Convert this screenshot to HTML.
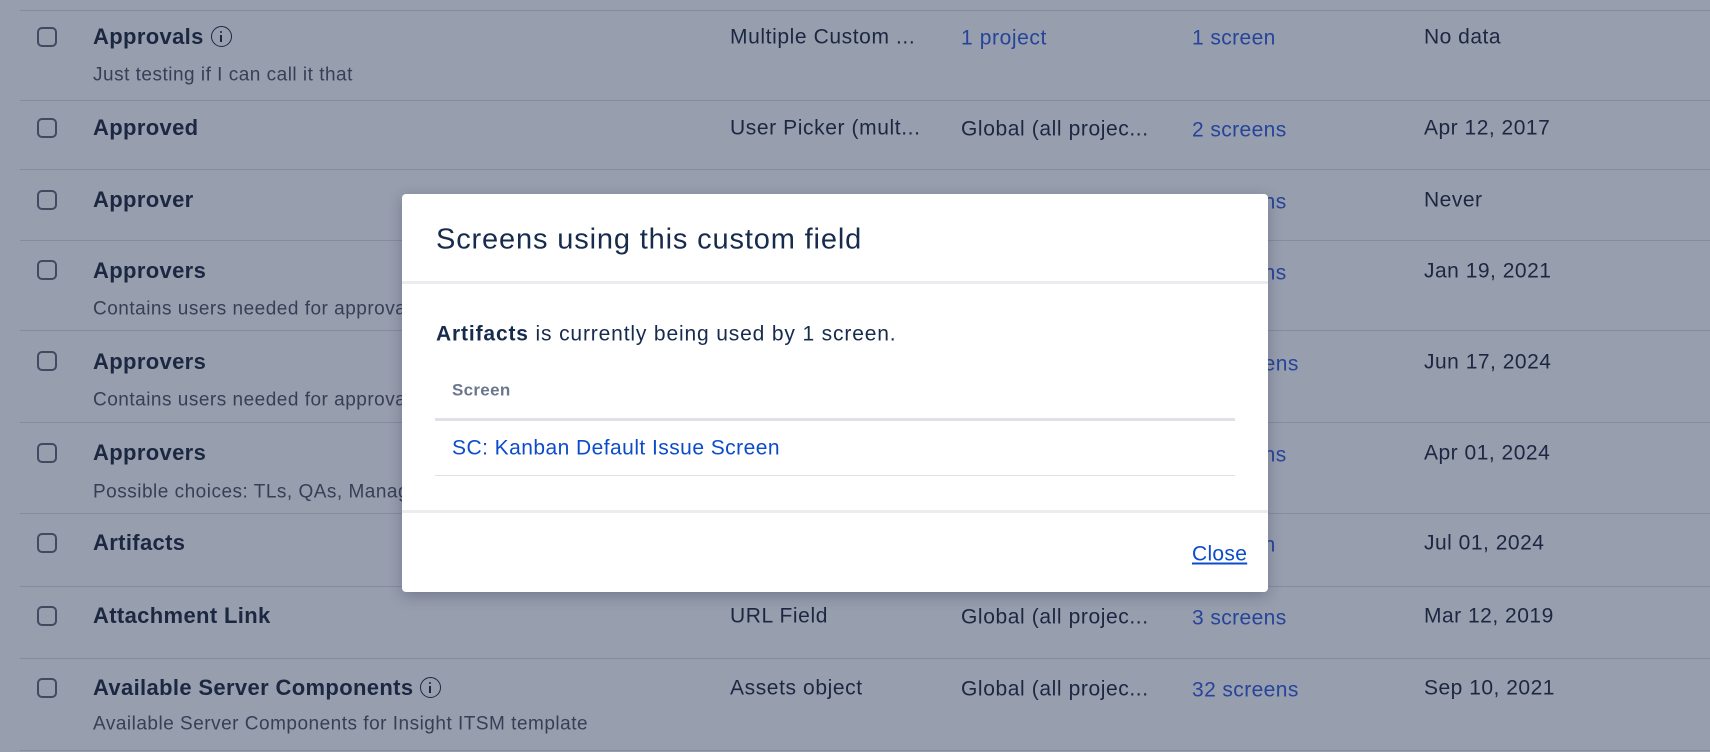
<!DOCTYPE html>
<html><head><meta charset="utf-8"><style>
*{margin:0;padding:0;box-sizing:border-box}
body{width:1710px;height:752px;overflow:hidden;background:#979eae;font-family:"Liberation Sans",Arial,sans-serif;position:relative;color:#1c2742}
.ln{position:absolute;left:20px;right:0;height:1px;background:#858c9e}
.cb{position:absolute;left:37px;width:20px;height:20px;border:2.5px solid #414a63;border-radius:5px}
.t{position:absolute;white-space:nowrap;line-height:1;transform:translateY(-50%)}
.b{font-weight:bold;font-size:22px;left:93px;letter-spacing:.35px}
.s{font-size:19px;left:93px;color:#363f56;letter-spacing:.5px}
.c1{left:730px;font-size:21px;letter-spacing:.6px}
.c2{left:961px;font-size:21px;letter-spacing:.6px}
.c3{left:1192px;font-size:21px;color:#26449a;letter-spacing:.4px}
.c4{left:1424px;font-size:21px;letter-spacing:.5px}
.i{display:inline-block;width:21px;height:21px;border:1.8px solid #1c2742;border-radius:50%;vertical-align:-3px;margin-left:7px;position:relative}
.i:before{content:"";position:absolute;left:7.8px;top:3.5px;width:2px;height:2px;background:#1c2742;border-radius:50%}
.i:after{content:"";position:absolute;left:7.8px;top:7.5px;width:2px;height:7px;background:#1c2742}
.modal{position:absolute;left:402px;top:194px;width:866px;height:398px;background:#fff;border-radius:4px;box-shadow:0 4px 14px rgba(30,40,70,.3)}
.modal .t{color:#172b4d}
</style></head><body>
<div class="ln" style="top:10px"></div>
<div class="ln" style="top:100px"></div>
<div class="ln" style="top:169px"></div>
<div class="ln" style="top:240px"></div>
<div class="ln" style="top:330px"></div>
<div class="ln" style="top:422px"></div>
<div class="ln" style="top:513px"></div>
<div class="ln" style="top:586px"></div>
<div class="ln" style="top:658px"></div>
<div class="ln" style="top:750px"></div>

<div class="cb" style="top:27px"></div>
<div class="t b" style="top:37px">Approvals<span class="i"></span></div>
<div class="t s" style="top:75px">Just testing if I can call it that</div>
<div class="t c1" style="top:37px">Multiple Custom ...</div>
<div class="t c2" style="top:38px;color:#26449a">1 project</div>
<div class="t c3" style="top:38px">1 screen</div>
<div class="t c4" style="top:37px">No data</div>

<div class="cb" style="top:118px"></div>
<div class="t b" style="top:128px">Approved</div>
<div class="t c1" style="top:128px">User Picker (mult...</div>
<div class="t c2" style="top:129px">Global (all projec...</div>
<div class="t c3" style="top:130px">2 screens</div>
<div class="t c4" style="top:128px">Apr 12, 2017</div>

<div class="cb" style="top:190px"></div>
<div class="t b" style="top:200px">Approver</div>
<div class="t c3" style="top:202px">2 screens</div>
<div class="t c4" style="top:200px">Never</div>

<div class="cb" style="top:260px"></div>
<div class="t b" style="top:271px">Approvers</div>
<div class="t s" style="top:309px">Contains users needed for approval</div>
<div class="t c3" style="top:273px">2 screens</div>
<div class="t c4" style="top:271px">Jan 19, 2021</div>

<div class="cb" style="top:351px"></div>
<div class="t b" style="top:362px">Approvers</div>
<div class="t s" style="top:400px">Contains users needed for approval</div>
<div class="t c3" style="top:364px">12 screens</div>
<div class="t c4" style="top:362px">Jun 17, 2024</div>

<div class="cb" style="top:443px"></div>
<div class="t b" style="top:453px">Approvers</div>
<div class="t s" style="top:492px">Possible choices: TLs, QAs, Managers</div>
<div class="t c3" style="top:455px">2 screens</div>
<div class="t c4" style="top:453px">Apr 01, 2024</div>

<div class="cb" style="top:533px"></div>
<div class="t b" style="top:543px">Artifacts</div>
<div class="t c3" style="top:545px">1 screen</div>
<div class="t c4" style="top:543px">Jul 01, 2024</div>

<div class="cb" style="top:606px"></div>
<div class="t b" style="top:616px">Attachment Link</div>
<div class="t c1" style="top:616px">URL Field</div>
<div class="t c2" style="top:617px">Global (all projec...</div>
<div class="t c3" style="top:618px">3 screens</div>
<div class="t c4" style="top:616px">Mar 12, 2019</div>

<div class="cb" style="top:678px"></div>
<div class="t b" style="top:688px">Available Server Components<span class="i"></span></div>
<div class="t s" style="top:724px">Available Server Components for Insight ITSM template</div>
<div class="t c1" style="top:688px">Assets object</div>
<div class="t c2" style="top:689px">Global (all projec...</div>
<div class="t c3" style="top:690px">32 screens</div>
<div class="t c4" style="top:688px">Sep 10, 2021</div>

<div class="modal">
  <div class="t" style="left:34px;top:46px;font-size:29px;letter-spacing:.85px">Screens using this custom field</div>
  <div style="position:absolute;left:0;right:0;top:87px;height:3px;background:#ebecf0"></div>
  <div class="t" style="left:34px;top:140px;font-size:21px;letter-spacing:.85px"><b>Artifacts</b> is currently being used by 1 screen.</div>
  <div class="t" style="left:50px;top:196px;font-size:17px;font-weight:bold;color:#6b778c;letter-spacing:.3px">Screen</div>
  <div style="position:absolute;left:33px;width:800px;top:224px;height:3px;background:#dfe1e6"></div>
  <div class="t" style="left:50px;top:254px;font-size:21px;color:#0c4ccb;letter-spacing:.45px">SC: Kanban Default Issue Screen</div>
  <div style="position:absolute;left:33px;width:800px;top:281px;height:1px;background:#dfe1e6"></div>
  <div style="position:absolute;left:0;right:0;top:316px;height:3px;background:#ebecf0"></div>
  <div class="t" style="left:790px;top:360px;font-size:21px;color:#0c4ccb;text-decoration:underline;letter-spacing:.3px">Close</div>
</div>
</body></html>
